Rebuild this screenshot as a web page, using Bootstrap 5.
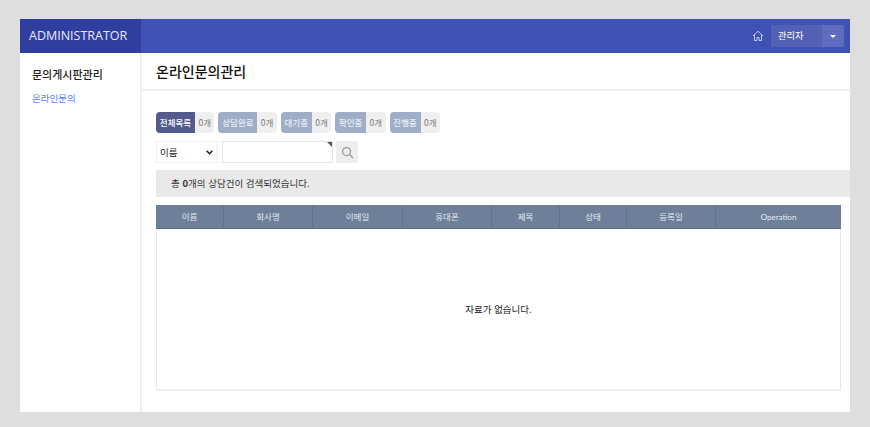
<!DOCTYPE html>
<html lang="ko">
<head>
    <meta charset="UTF-8">
    <meta name="viewport" content="width=device-width, initial-scale=1.0">
    <title>온라인문의관리</title>
    <link rel="stylesheet" href="https://cdn.jsdelivr.net/npm/bootstrap@5.3.0/dist/css/bootstrap.min.css">
    <style>
        html, body { height: 100%; overflow: hidden; }
        body { background: #dedede; padding: 19px 20px 15px; font-family: "Noto Sans CJK KR", "Noto Sans", sans-serif; font-size: 9px; color: #222; }
        .admin-frame { width: 830px; height: 393px; background: #fff; }
        .top-bar { height: 34px; background: #3f51b5; }
        .brand-box { width: 121px; background: #303f9f; color: #e8eaf6; font-family: "Open Sans", sans-serif; font-size: 12.500px; padding-left: 9px; }
        .home-icon { width: 12px; height: 12px; margin-right: 7px; }
        .user-btn { width: 51px; height: 22px; background: #5360b4; color: #fff; font-size: 9.200px; padding-left: 7px; border-radius: 2px 0 0 2px; }
        .user-caret { width: 22px; height: 22px; background: #5f6cc0; border-radius: 0 2px 2px 0; }
        .user-caret::after { content: ""; border: 3px solid transparent; border-top: 3px solid #fff; border-bottom: 0; }
        .top-right { padding-right: 6px; }
        .side-menu { width: 122px; height: 359px; border-right: 2px solid #f0f0f0; padding: 13px 12px; }
        .side-title { font-size: 11px; color: #222; line-height: 16px; font-weight: 500; }
        .side-link { font-size: 9.500px; color: #5c7cfa; margin-top: 9px; line-height: 14px; text-decoration: none; display: block; }
        .main-area { width: 708px; }
        .page-title { height: 38px; border-bottom: 2px solid #f0f0f0; padding-left: 14px; font-size: 14px; font-weight: 500; color: #111; line-height: 36px; }
        .main-body { padding: 21px 0 0 14px; }
        .tab-row { gap: 4px; height: 22px; }
        .tab-item { background: #efefef; border-radius: 4px; height: 21px; overflow: hidden; color: #777; font-size: 8.500px; }
        .tab-name { width: 39px; background: #9fadc9; color: #e8edf5; height: 100%; display: flex; align-items: center; justify-content: center; font-weight: 500; }
        .tab-name.is-short { width: 31px; }
        .tab-name.is-on { background: #525b8d; color: #fff; }
        .tab-count { width: 19.400px; text-align: center; }
        .search-row { margin-top: 7px; height: 23px; }
        .search-select { width: 61px; height: 22px; padding: 0 0 0 3px; border: 1px solid #efefef; border-radius: 0; font-size: 9.500px; color: #222; background-color: #fff; background-image: url("data:image/svg+xml,%3csvg xmlns='http://www.w3.org/2000/svg' viewBox='0 0 7 5'%3e%3cpath fill='none' stroke='%23222' stroke-width='1.600' d='M.6.800 3.500 3.700 6.400.800'/%3e%3c/svg%3e"); background-position: right 3px center; background-size: 7px 5px; }
        .search-input { position: relative; width: 111px; height: 22px; border: 1px solid #e4e4e4; margin-left: 5px; }
        .search-input::after { content: ""; position: absolute; top: 0; right: 0; border-top: 5px solid #555; border-left: 5px solid transparent; }
        .search-btn { width: 22px; height: 22px; background: #eee; margin-left: 3px; }
        .search-btn svg { width: 13px; height: 13px; }
        .result-box { height: 27px; background: #e9e9e9; margin-top: 6px; padding-left: 15px; font-size: 9.500px; line-height: 27px; color: #333; }
        .grid-box { width: 685px; margin-top: 8px; }
        .grid-head { height: 24px; background: #6d7f99; border-bottom: 1px solid #5f7089; color: #e6ebf2; font-size: 8.500px; }
        .grid-head > div { height: 100%; display: flex; align-items: center; justify-content: center; border-right: 1px solid #63748e; }
        .grid-head > div:last-child { border-right: 0; font-family: Lato, sans-serif; font-size: 8px; padding-top: 1px; }
        .grid-empty { height: 162px; border: 1px solid #e4e8ee; border-top: 0; border-bottom-width: 2px; border-bottom-color: #f0f0f6; color: #222; font-size: 9.500px; }
        .w-67 { width: 67px; } .w-68 { width: 68px; } .w-89 { width: 89px; } .w-90 { width: 90px; } .w-125 { width: 125px; }
    </style>
</head>
<body>

    <div class="admin-frame">
        <div class="top-bar d-flex justify-content-between">
            <div class="brand-box d-flex align-items-center">ADMINISTRATOR</div>
            <div class="top-right d-flex align-items-center">
                <svg class="home-icon" viewBox="0 0 12 12" fill="none" stroke="#c5cae9" stroke-width="1">
                    <path d="M1 6 6 1.200 11 6M2.500 5v5.500h2.500V7.500h2v3h2.500V5"/>
                </svg>
                <div class="user-btn d-flex align-items-center">관리자</div>
                <div class="user-caret d-flex align-items-center justify-content-center"></div>
            </div>
        </div>

        <div class="d-flex">
            <div class="side-menu">
                <div class="side-title">문의게시판관리</div>
                <a class="side-link" href="#">온라인문의</a>
            </div>

            <div class="main-area">
                <div class="page-title">온라인문의관리</div>
                <div class="main-body">
                    <div class="tab-row d-flex">
                        <div class="tab-item d-flex align-items-center"><span class="tab-name is-on">전체목록</span><span class="tab-count">0개</span></div>
                        <div class="tab-item d-flex align-items-center"><span class="tab-name">상담완료</span><span class="tab-count">0개</span></div>
                        <div class="tab-item d-flex align-items-center"><span class="tab-name is-short">대기중</span><span class="tab-count">0개</span></div>
                        <div class="tab-item d-flex align-items-center"><span class="tab-name is-short">확인중</span><span class="tab-count">0개</span></div>
                        <div class="tab-item d-flex align-items-center"><span class="tab-name is-short">진행중</span><span class="tab-count">0개</span></div>
                    </div>

                    <div class="search-row d-flex">
                        <select class="form-select search-select">
                            <option>이름</option>
                        </select>
                        <div class="search-input"></div>
                        <div class="search-btn d-flex align-items-center justify-content-center">
                            <svg viewBox="0 0 14 14" fill="none" stroke="#999" stroke-width="1.400">
                                <circle cx="6" cy="6" r="4.300"/>
                                <path d="M9.200 9.200 13 13"/>
                            </svg>
                        </div>
                    </div>

                    <div class="result-box">총 <b>0</b>개의 상담건이 검색되었습니다.</div>

                    <div class="grid-box">
                        <div class="grid-head d-flex">
                            <div class="w-68">이름</div>
                            <div class="w-89">회사명</div>
                            <div class="w-90">이메일</div>
                            <div class="w-89">휴대폰</div>
                            <div class="w-68">제목</div>
                            <div class="w-67">상태</div>
                            <div class="w-89">등록일</div>
                            <div class="w-125">Operation</div>
                        </div>
                        <div class="grid-empty d-flex align-items-center justify-content-center">자료가 없습니다.</div>
                    </div>
                </div>
            </div>
        </div>
    </div>

</body>
</html>
